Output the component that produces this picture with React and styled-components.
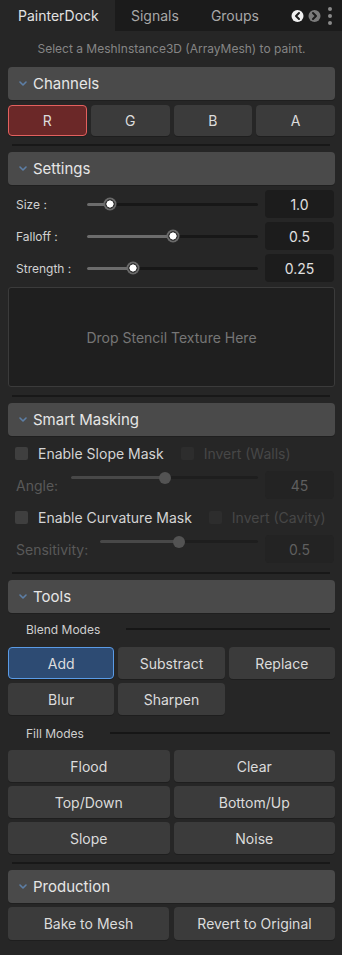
import React from 'react';
import styled, { createGlobalStyle } from 'styled-components';

const GlobalStyle = createGlobalStyle`
  html, body {
    margin: 0;
    padding: 0;
    background: #262626;
  }
  body {
    font-family: Inter, "Noto Sans", "Liberation Sans", sans-serif;
    -webkit-font-smoothing: antialiased;
  }
`;

function Chevron() {
  return (
    <svg width="8" height="5" viewBox="0 0 8 5">
      <path d="M1 1 L4 4 L7 1" fill="none" stroke="#5d7fa6" strokeWidth="1.6" strokeLinecap="round" strokeLinejoin="round" />
    </svg>
  );
}

function TabArrows() {
  return (
    <svg width="46" height="22" viewBox="0 0 46 22">
      <circle cx="6.5" cy="11" r="6" fill="#f0f0f0" />
      <path d="M8 8 L5 11 L8 14" fill="none" stroke="#1b1b1b" strokeWidth="2" strokeLinecap="round" strokeLinejoin="round" />
      <circle cx="23.5" cy="11" r="6" fill="#7a7a7a" />
      <path d="M22 8 L25 11 L22 14" fill="none" stroke="#1b1b1b" strokeWidth="2" strokeLinecap="round" strokeLinejoin="round" />
      <circle cx="39" cy="4" r="2" fill="#8a8a8a" />
      <circle cx="39" cy="11" r="2" fill="#8a8a8a" />
      <circle cx="39" cy="18" r="2" fill="#8a8a8a" />
    </svg>
  );
}

function Slider({ value, disabled }) {
  return (
    <Track disabled={disabled}>
      <Fill disabled={disabled} style={{ width: `${value}%` }} />
      <Thumb disabled={disabled} style={{ left: `${value}%` }} />
    </Track>
  );
}

function Section({ title, children }) {
  return (
    <>
      <Header>
        <Chevron />
        <span>{title}</span>
      </Header>
      {children}
    </>
  );
}

export default function App() {
  return (
    <Dock>
      <GlobalStyle />
      <TabBar>
        <Tab active>PainterDock</Tab>
        <Tab>Signals</Tab>
        <Tab>Groups</Tab>
        <TabTools>
          <TabArrows />
        </TabTools>
      </TabBar>

      <Body>
        <Hint>Select a MeshInstance3D (ArrayMesh) to paint.</Hint>

        <Section title="Channels">
          <ButtonGrid cols={4} top={5}>
            <Button tone="red">R</Button>
            <Button>G</Button>
            <Button>B</Button>
            <Button>A</Button>
          </ButtonGrid>
        </Section>
        <Separator />

        <Section title="Settings">
          <SliderList>
            {[
              ['Size :', 13.5, '1.0'],
              ['Falloff :', 50, '0.5'],
              ['Strength :', 27, '0.25'],
            ].map(([label, v, text]) => (
              <ParamRow key={label}>
                <ParamLabel width={71}>{label}</ParamLabel>
                <Slider value={v} />
                <ValueBox>{text}</ValueBox>
              </ParamRow>
            ))}
          </SliderList>
          <DropZone>Drop Stencil Texture Here</DropZone>
        </Section>
        <Separator />

        <Section title="Smart Masking">
          <MaskList>
            <CheckRow>
              <Check>
                <Box />
                <span>Enable Slope Mask</span>
              </Check>
              <Check disabled>
                <Box disabled />
                <span>Invert (Walls)</span>
              </Check>
            </CheckRow>
            <ParamRow>
              <ParamLabel muted gap={13}>Angle:</ParamLabel>
              <SliderSlot>
                <Slider value={50} disabled />
              </SliderSlot>
              <ValueBox muted>45</ValueBox>
            </ParamRow>
            <CheckRow>
              <Check>
                <Box />
                <span>Enable Curvature Mask</span>
              </Check>
              <Check disabled>
                <Box disabled />
                <span>Invert (Cavity)</span>
              </Check>
            </CheckRow>
            <ParamRow>
              <ParamLabel muted gap={12}>Sensitivity:</ParamLabel>
              <SliderSlot>
                <Slider value={50} disabled />
              </SliderSlot>
              <ValueBox muted>0.5</ValueBox>
            </ParamRow>
          </MaskList>
        </Section>
        <Separator top={9} />

        <Section title="Tools">
          <GroupLabel top={4}>
            <span>Blend Modes</span>
            <Rule />
          </GroupLabel>
          <ButtonGrid cols={3} top={6} height={32}>
            <Button tone="blue">Add</Button>
            <Button>Substract</Button>
            <Button>Replace</Button>
            <Button>Blur</Button>
            <Button>Sharpen</Button>
          </ButtonGrid>
          <GroupLabel top={6}>
            <span>Fill Modes</span>
            <Rule />
          </GroupLabel>
          <ButtonGrid cols={2} top={5} height={32}>
            <Button>Flood</Button>
            <Button>Clear</Button>
            <Button>Top/Down</Button>
            <Button>Bottom/Up</Button>
            <Button>Slope</Button>
            <Button>Noise</Button>
          </ButtonGrid>
        </Section>
        <Separator />

        <Section title="Production">
          <ButtonGrid cols={2} top={4} height={33} gap={5}>
            <Button>Bake to Mesh</Button>
            <Button>Revert to Original</Button>
          </ButtonGrid>
        </Section>
      </Body>
    </Dock>
  );
}

const Dock = styled.div`
  width: 342px;
  height: 955px;
  background: #262626;
  display: flex;
  flex-direction: column;
  overflow: hidden;
`;

const TabBar = styled.div`
  height: 31px;
  background: #1b1b1b;
  display: flex;
  align-items: stretch;
`;

const Tab = styled.div`
  display: flex;
  align-items: center;
  padding: 0 ${(p) => (p.active ? '17px' : '16px')} 0 ${(p) => (p.active ? '18px' : '16px')};
  width: ${(p) => (p.active ? '115px' : 'auto')};
  box-sizing: border-box;
  background: ${(p) => (p.active ? '#262626' : 'transparent')};
  color: ${(p) => (p.active ? '#e2e2e2' : '#a8a8a8')};
  font-size: 14px;
  white-space: nowrap;
`;

const TabTools = styled.div`
  margin-left: auto;
  padding-right: 5px;
  display: flex;
  align-items: center;
`;

const Body = styled.div`
  display: flex;
  flex-direction: column;
  padding: 0 7px 0 8px;
`;

const Hint = styled.div`
  height: 36px;
  line-height: 36px;
  text-align: center;
  color: #858585;
  font-size: 12px;
`;

const Header = styled.div`
  height: 33px;
  box-sizing: border-box;
  background: #4a4a4a;
  border-radius: 4px;
  box-shadow: 0 1px 0 #1f1f1f;
  display: flex;
  align-items: center;
  gap: 6px;
  padding-left: 11px;
  color: #e6e6e6;
  font-size: 15px;
`;

const Separator = styled.div`
  height: 2px;
  background: #181818;
  margin: ${(p) => p.top ?? 8}px 5px 6px 4px;
`;

const ButtonGrid = styled.div`
  display: grid;
  grid-template-columns: repeat(${(p) => p.cols}, 1fr);
  grid-auto-rows: ${(p) => p.height ?? 31}px;
  gap: 4px ${(p) => p.gap ?? 4}px;
  margin-top: ${(p) => p.top ?? 4}px;
`;

const toneStyles = {
  red: 'background: #6b2828; border: 1.5px solid #e3605e;',
  blue: 'background: #2d4b73; border: 1.5px solid #5a9be6;',
};

const Button = styled.div`
  box-sizing: border-box;
  border-radius: 4px;
  background: #3b3b3b;
  border: 1.5px solid transparent;
  box-shadow: 0 1px 0 #1e1e1e;
  ${(p) => toneStyles[p.tone] || ''}
  color: #dcdcdc;
  font-size: 14px;
  display: flex;
  align-items: center;
  justify-content: center;
  white-space: nowrap;
`;

const SliderList = styled.div`
  display: flex;
  flex-direction: column;
  gap: 4px;
  margin-top: 5px;
`;

const MaskList = styled.div`
  display: flex;
  flex-direction: column;
  gap: 4px;
  margin-top: 3px;
`;

const ParamRow = styled.div`
  height: 28px;
  display: flex;
  align-items: center;
  padding-left: 8px;
`;

const ParamLabel = styled.div`
  width: ${(p) => (p.width ? `${p.width}px` : 'auto')};
  margin-right: ${(p) => p.gap ?? 0}px;
  flex-shrink: 0;
  font-size: ${(p) => (p.muted ? 14 : 12)}px;
  color: ${(p) => (p.muted ? '#595959' : '#d2d2d2')};
  white-space: nowrap;
`;

const SliderSlot = styled.div`
  flex: 1;
  align-self: flex-start;
  padding-top: 5px;
  display: flex;
`;

const Track = styled.div`
  position: relative;
  flex: 1;
  height: 3px;
  border-radius: 2px;
  background: ${(p) => (p.disabled ? '#1e1e1e' : '#171717')};
  margin-right: 7px;
`;

const Fill = styled.div`
  height: 100%;
  border-radius: 2px;
  background: ${(p) => (p.disabled ? '#484848' : '#6c6c6c')};
`;

const Thumb = styled.div`
  position: absolute;
  top: 50%;
  width: ${(p) => (p.disabled ? 12 : 13)}px;
  height: ${(p) => (p.disabled ? 12 : 13)}px;
  border-radius: 50%;
  transform: translate(-50%, -50%);
  box-sizing: border-box;
  background: ${(p) =>
    p.disabled
      ? '#535353'
      : 'radial-gradient(circle, #ffffff 0 3.3px, #3a3a3a 3.8px 4.6px, #6a6a6a 5px)'};
`;

const ValueBox = styled.div`
  width: 69px;
  height: 28px;
  flex-shrink: 0;
  margin-right: 1px;
  border-radius: 4px;
  background: ${(p) => (p.muted ? '#232323' : '#1c1c1c')};
  color: ${(p) => (p.muted ? '#5f5f5f' : '#e0e0e0')};
  font-size: 14px;
  display: flex;
  align-items: center;
  justify-content: center;
`;

const DropZone = styled.div`
  margin-top: 5px;
  height: 100px;
  box-sizing: border-box;
  background: #1f1f1f;
  border: 1px solid #3b3b3b;
  border-radius: 3px;
  display: flex;
  align-items: center;
  justify-content: center;
  color: #767676;
  font-size: 14px;
`;

const CheckRow = styled.div`
  height: 28px;
  display: flex;
  align-items: center;
  padding-left: 7px;
  gap: 17px;
`;

const Check = styled.div`
  display: flex;
  align-items: center;
  gap: 10px;
  font-size: 14px;
  color: ${(p) => (p.disabled ? '#474747' : '#d4d4d4')};
  white-space: nowrap;
`;

const Box = styled.div`
  width: 13px;
  height: 13px;
  border-radius: 2px;
  background: ${(p) => (p.disabled ? '#2d2d2d' : '#3f3f3f')};
`;

const GroupLabel = styled.div`
  height: 24px;
  margin-top: ${(p) => p.top ?? 4}px;
  display: flex;
  align-items: center;
  gap: 26px;
  padding: 0 5px 0 18px;
  font-size: 12px;
  color: #cfcfcf;
`;

const Rule = styled.div`
  flex: 1;
  height: 2px;
  background: #161616;
`;
